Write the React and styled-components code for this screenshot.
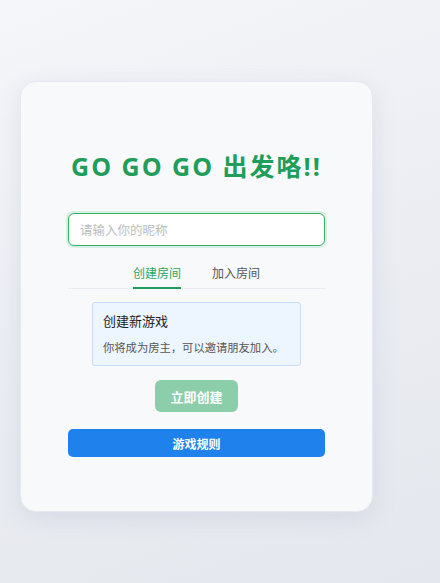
import React, { useState } from 'react';
import styled, { createGlobalStyle } from 'styled-components';

const GlobalStyle = createGlobalStyle`
  html, body {
    margin: 0;
    padding: 0;
  }
  body {
    min-height: 583px;
    background: linear-gradient(160deg, #f5f6f9 0%, #eceef3 45%, #e4e7ed 100%);
    font-family: "Noto Sans", "Noto Sans CJK SC", sans-serif;
  }
`;

const Page = styled.div`
  padding: 81px 0 0 20px;
`;

const Card = styled.div`
  width: 353px;
  box-sizing: border-box;
  padding: 0 47px 54px;
  background: #f8f9fb;
  border-radius: 16px;
  border: 1px solid #e6e9f0;
  box-shadow: 0 6px 22px rgba(150, 160, 190, 0.22);
  display: flex;
  flex-direction: column;
  align-items: center;
`;

const Title = styled.h1`
  margin: 70px 0 32px;
  font-family: "Open Sans", "Noto Sans CJK SC", sans-serif;
  font-size: 25px;
  line-height: 29px;
  font-weight: 700;
  letter-spacing: 2px;
  color: #1e9e5a;
  white-space: nowrap;
`;

const NameInput = styled.input`
  width: 100%;
  height: 33px;
  box-sizing: border-box;
  padding: 0 11px;
  border: 1px solid #34b06a;
  border-radius: 6px;
  background: #fff;
  box-shadow: 0 0 0 2px rgba(52, 176, 106, 0.16);
  font-family: "Noto Sans CJK SC", sans-serif;
  font-size: 12.5px;
  color: #333;
  outline: none;
  caret-color: #1e9e5a;

  &::placeholder {
    color: #bdbdbd;
  }
`;

const TabBar = styled.div`
  margin-top: 12px;
  width: 100%;
  display: flex;
  justify-content: center;
  gap: 31px;
  border-bottom: 1px solid #e8ebf0;
`;

const Tab = styled.button`
  border: none;
  background: none;
  padding: 6px 0 5px;
  font-family: "Noto Sans CJK SC", sans-serif;
  font-size: 12px;
  line-height: 18px;
  color: ${(p) => (p.$active ? '#2aa862' : '#555')};
  border-bottom: 2px solid ${(p) => (p.$active ? '#1e9e5a' : 'transparent')};
  margin-bottom: -1px;
  cursor: pointer;
`;

const InfoBox = styled.div`
  margin-top: 13px;
  width: 209px;
  box-sizing: border-box;
  padding: 9px 10px 10px;
  background: #edf5ff;
  border: 1px solid #c7ddf6;
  border-radius: 3px;
`;

const InfoTitle = styled.div`
  font-family: "Noto Sans CJK SC", sans-serif;
  font-size: 13px;
  line-height: 18px;
  color: #222;
`;

const InfoText = styled.div`
  margin-top: 9px;
  font-family: "Noto Sans CJK SC", sans-serif;
  font-size: 11.3px;
  line-height: 16px;
  color: #555;
  white-space: nowrap;
`;

const CreateButton = styled.button`
  margin-top: 14px;
  width: 83px;
  height: 32px;
  border: none;
  border-radius: 6px;
  background: #8bcea9;
  color: #fff;
  font-family: "Noto Sans CJK SC", sans-serif;
  font-size: 13px;
  font-weight: 700;
  cursor: not-allowed;
`;

const RulesButton = styled.button`
  margin-top: 17px;
  width: 100%;
  height: 28px;
  border: none;
  border-radius: 5px;
  background: #1f81ec;
  color: #fff;
  font-family: "Noto Sans CJK SC", sans-serif;
  font-size: 12px;
  font-weight: 700;
  cursor: pointer;
`;

export default function App() {
  const [tab, setTab] = useState('create');
  const [name, setName] = useState('');

  return (
    <Page>
      <GlobalStyle />
      <Card>
        <Title>GO GO GO 出发咯!!</Title>
        <NameInput
          autoFocus
          placeholder="请输入你的昵称"
          value={name}
          onChange={(e) => setName(e.target.value)}
        />
        <TabBar>
          <Tab $active={tab === 'create'} onClick={() => setTab('create')}>
            创建房间
          </Tab>
          <Tab $active={tab === 'join'} onClick={() => setTab('join')}>
            加入房间
          </Tab>
        </TabBar>
        <InfoBox>
          <InfoTitle>创建新游戏</InfoTitle>
          <InfoText>你将成为房主，可以邀请朋友加入。</InfoText>
        </InfoBox>
        <CreateButton disabled={!name}>立即创建</CreateButton>
        <RulesButton>游戏规则</RulesButton>
      </Card>
    </Page>
  );
}
